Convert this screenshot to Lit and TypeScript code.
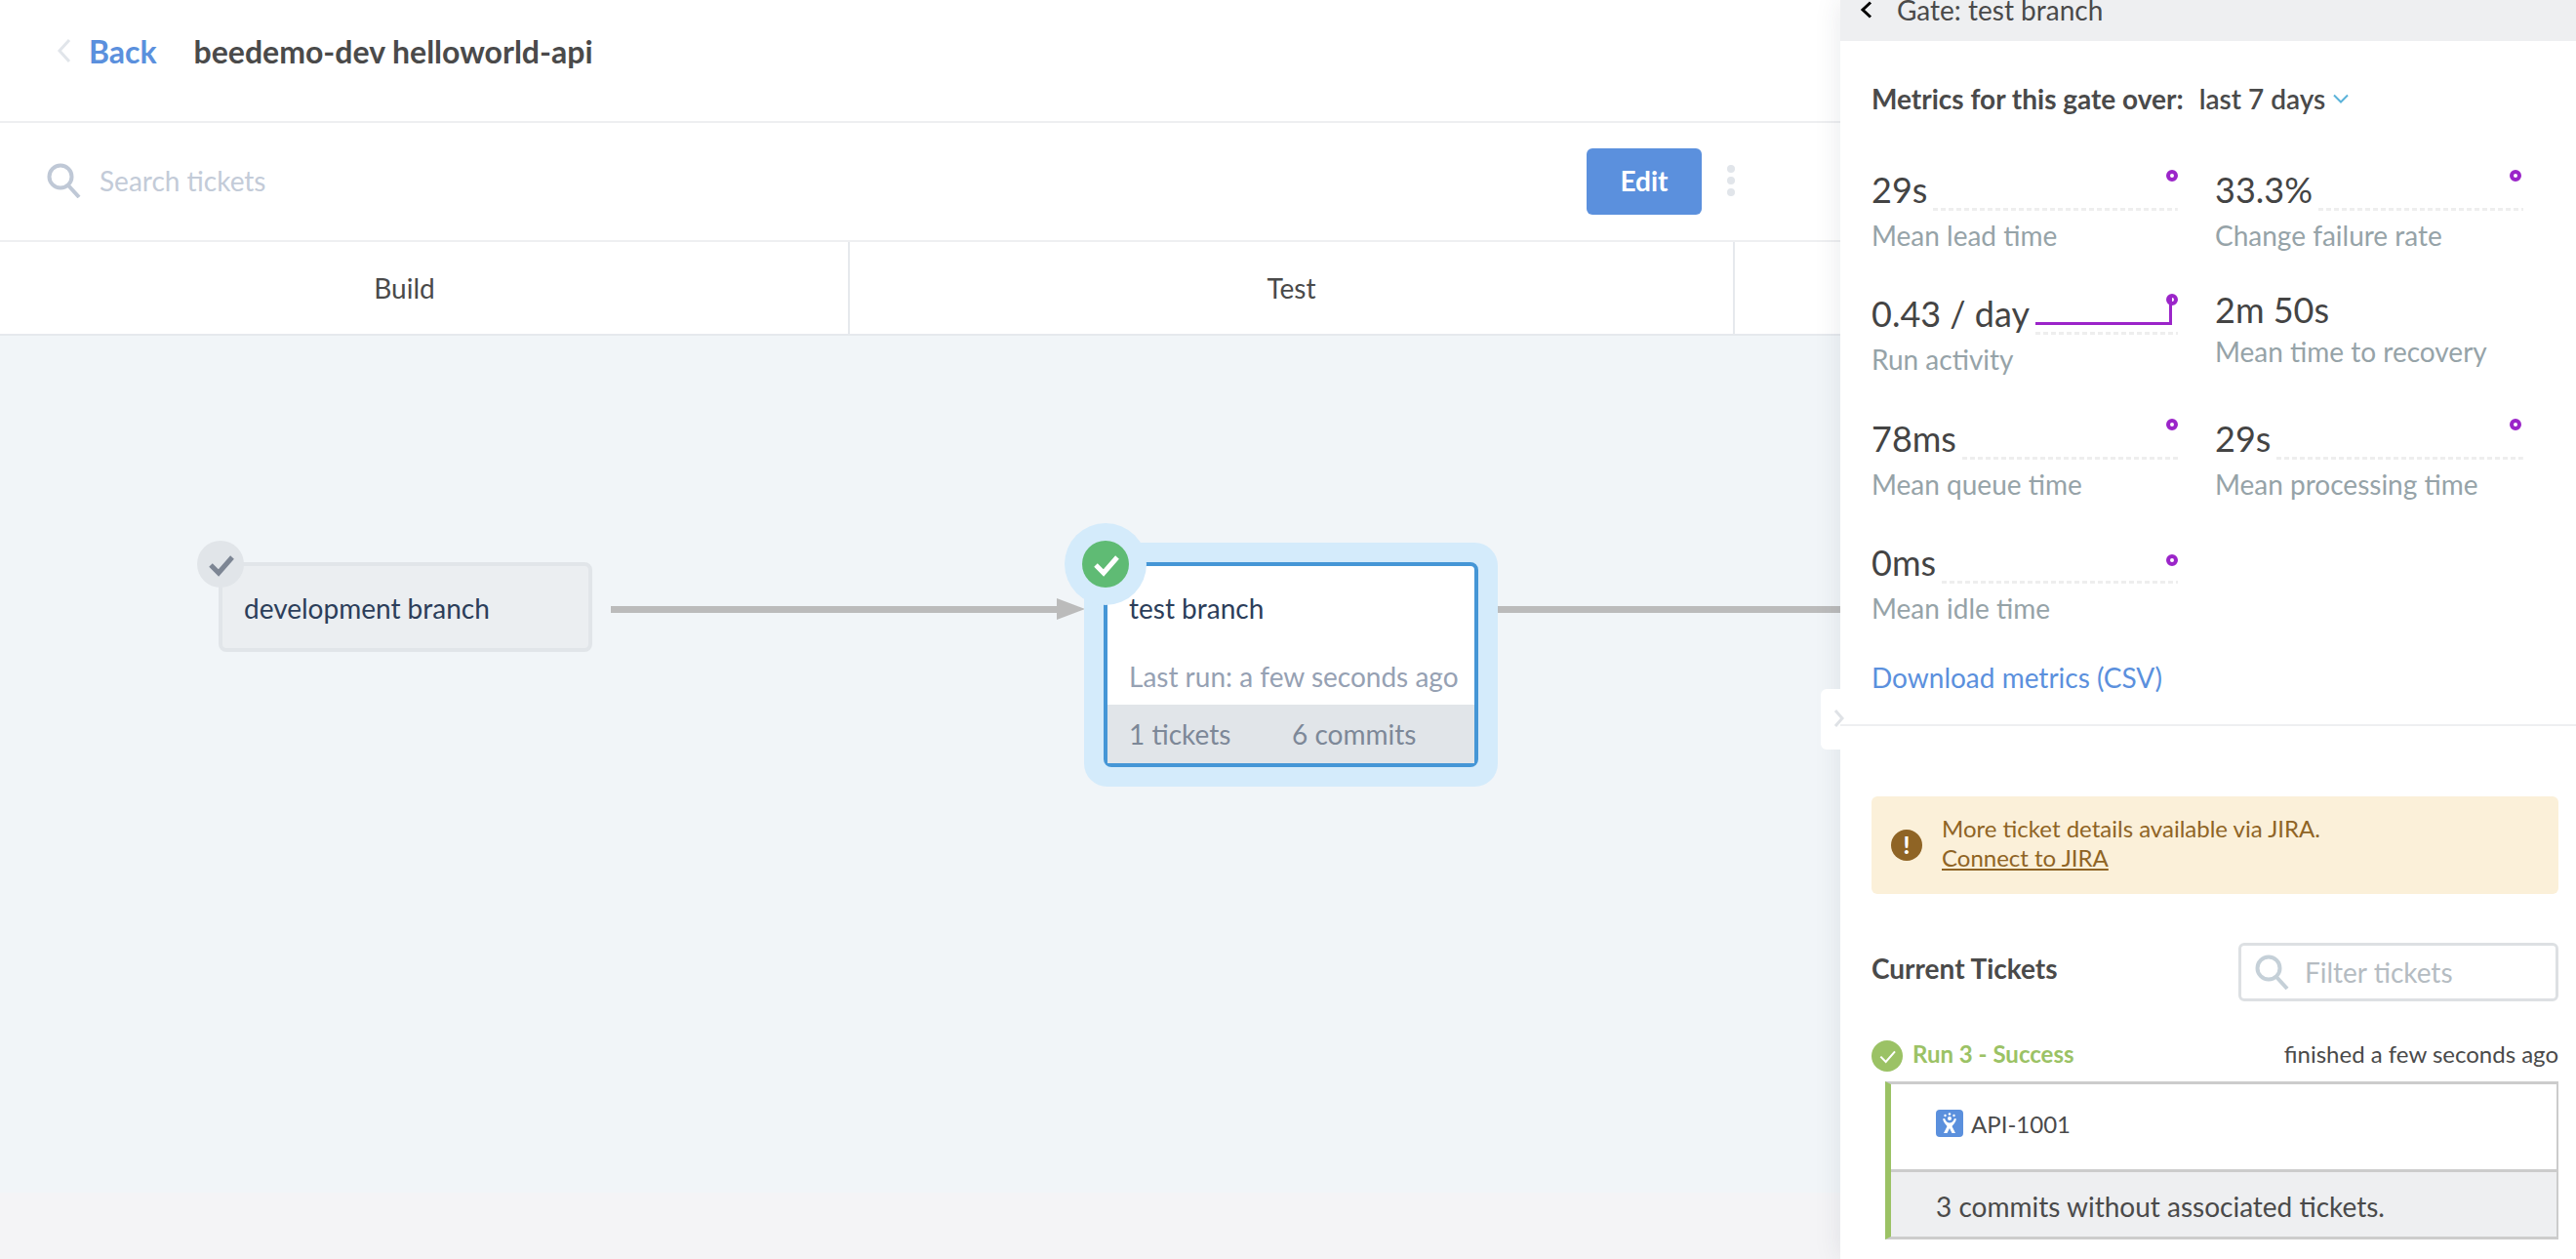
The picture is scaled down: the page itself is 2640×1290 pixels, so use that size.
import { LitElement, html, css, nothing } from 'lit';
import { customElement } from 'lit/decorators.js';

const check = (color: string, width = 3) => html`
  <svg viewBox="0 0 48 48" width="48" height="48">
    <path d="M14 25l8 8 14-16" fill="none" stroke=${color} stroke-width=${width} />
  </svg>
`;

const searchIcon = (color: string) => html`
  <svg viewBox="0 0 36 36" width="36" height="36">
    <circle cx="14" cy="14" r="11.5" fill="none" stroke=${color} stroke-width="4" />
    <path d="M22 23l11 12" fill="none" stroke=${color} stroke-width="4" />
  </svg>
`;

interface Metric {
  value: string;
  label: string;
  spark?: boolean;
  line?: boolean;
  dotTop?: number;
}

const metrics: Metric[] = [
  { value: '29s', label: 'Mean lead time', spark: true },
  { value: '33.3%', label: 'Change failure rate', spark: true },
  { value: '0.43 / day', label: 'Run activity', spark: true, line: true },
  { value: '2m 50s', label: 'Mean time to recovery' },
  { value: '78ms', label: 'Mean queue time', spark: true },
  { value: '29s', label: 'Mean processing time', spark: true },
  { value: '0ms', label: 'Mean idle time', spark: true, dotTop: 24 },
];

@customElement('gate-panel')
class GatePanel extends LitElement {
  static styles = css`
    :host {
      display: block;
      position: relative;
      z-index: 2;
      flex: 0 0 754px;
      height: 1290px;
      background: #fff;
      box-shadow: 0 0 26px rgba(40, 50, 70, 0.1);
      color: #4a4a4a;
    }
    .crumb {
      height: 42px;
      background: #eeeff1;
      display: flex;
      align-items: flex-start;
      padding-left: 20px;
      gap: 24px;
      font-size: 28px;
      line-height: 20px;
    }
    .crumb svg {
      margin-top: 1px;
    }
    .metrics {
      padding: 40px 0 0 32px;
      height: 702px;
      box-sizing: border-box;
      border-bottom: 2px solid #eeeff1;
    }
    .period {
      display: flex;
      align-items: center;
      height: 38px;
      font-size: 28px;
      font-weight: 700;
      color: #4a4a4a;
    }
    .period .range {
      margin-left: 16px;
      font-weight: 600;
    }
    .period svg {
      margin-left: 8px;
    }
    .grid {
      display: grid;
      grid-template-columns: 314px 316px;
      column-gap: 38px;
      grid-auto-rows: 127.3px;
      margin-top: 42px;
    }
    .top {
      display: flex;
      align-items: flex-end;
      height: 54px;
    }
    .value {
      font-size: 36px;
      line-height: 44px;
      white-space: nowrap;
      color: #444;
    }
    .spark {
      flex: 1;
      position: relative;
      height: 54px;
      margin-left: 6px;
      background: repeating-linear-gradient(90deg, #eee 0 5px, transparent 5px 8px) bottom / 100% 3px no-repeat;
    }
    .grid > div:nth-child(even) .dot {
      right: 2px;
    }
    .dot {
      position: absolute;
      right: 0;
      top: 12px;
      width: 4px;
      height: 4px;
      border: 4px solid #9b25c9;
      border-radius: 50%;
    }
    .line {
      position: absolute;
      left: 0;
      right: 6px;
      top: 16px;
      height: 28px;
      border-right: 3px solid #9b25c9;
      border-bottom: 3px solid #9b25c9;
      box-sizing: border-box;
    }
    .label {
      margin-top: 7px;
      font-size: 28px;
      line-height: 36px;
      color: #96a3a8;
    }
    .plain .top {
      height: 50px;
    }
    .plain .label {
      margin-top: 3px;
    }
    .download {
      display: block;
      margin-top: 5px;
      font-size: 28px;
      line-height: 36px;
      color: #5b90dd;
    }
    .tab {
      position: absolute;
      left: -20px;
      top: 706px;
      width: 20px;
      height: 62px;
      background: #fff;
      border-radius: 6px 0 0 6px;
    }
    .tab svg {
      position: absolute;
      left: 13px;
      top: 20px;
    }
    .lower {
      padding: 72px 18px 0 32px;
    }
    .alert {
      display: flex;
      align-items: center;
      gap: 20px;
      height: 100px;
      padding-left: 20px;
      background: #fbf0d9;
      border-radius: 6px;
      color: #8f6425;
      font-size: 24px;
      line-height: 30px;
    }
    .alert .copy {
      padding-bottom: 4px;
    }
    .alert u {
      display: block;
    }
    .bang {
      width: 32px;
      height: 32px;
      border-radius: 50%;
      background: #8f6425;
      color: #fff;
      font-weight: 900;
      font-size: 24px;
      line-height: 32px;
      text-align: center;
    }
    .tickets-head {
      display: flex;
      justify-content: space-between;
      align-items: center;
      margin-top: 50px;
      height: 60px;
    }
    .tickets-head h2 {
      margin: 0 0 9px;
      font-size: 28px;
      font-weight: 700;
    }
    .filter {
      width: 328px;
      height: 60px;
      box-sizing: border-box;
      border: 3px solid #dde0e3;
      border-radius: 6px;
      display: flex;
      align-items: center;
      gap: 15px;
      padding-left: 14px;
      font-size: 28px;
      color: #b5bcc2;
    }
    .run {
      display: flex;
      align-items: center;
      margin-top: 40px;
      height: 32px;
      font-size: 24px;
    }
    .run span {
      padding-bottom: 5px;
    }
    .run .state {
      margin-left: 10px;
      color: #9bc265;
      font-weight: 700;
    }
    .run .when {
      margin-left: auto;
    }
    .run-badge {
      width: 32px;
      height: 32px;
      border-radius: 50%;
      background: #9bc265;
    }
    .run-badge svg {
      display: block;
      width: 32px;
      height: 32px;
    }
    .ticket {
      margin: 10px 0 0 14px;
      border: 3px solid #ccc;
      border-right-width: 2px;
      border-left: 6px solid #9bc265;
      font-size: 28px;
    }
    .issue {
      display: flex;
      align-items: center;
      gap: 8px;
      height: 90px;
      box-sizing: border-box;
      padding: 0 0 7px 46px;
      font-size: 24px;
      border-bottom: 3px solid #ccc;
    }
    .issue svg {
      display: block;
    }
    .loose {
      height: 66px;
      line-height: 70px;
      padding-left: 46px;
      background: #eeeff1;
    }
  `;

  render() {
    return html`
      <div class="crumb">
        <svg viewBox="0 0 14 18" width="14" height="18">
          <path d="M11 1.500L3 9l8 7.500" fill="none" stroke="#000" stroke-width="3" />
        </svg>
        <span>Gate: test branch</span>
      </div>
      <div class="metrics">
        <div class="period">
          Metrics for this gate over:
          <span class="range">last 7 days</span>
          <svg viewBox="0 0 16 10" width="16" height="10">
            <path d="M1 1.500l7 7 7-7" fill="none" stroke="#5ab2d9" stroke-width="2" />
          </svg>
        </div>
        <div class="grid">
          ${metrics.map(
            (m) => html`
              <div class=${m.spark ? '' : 'plain'}>
                <div class="top">
                  <span class="value">${m.value}</span>
                  ${m.spark
                    ? html`<div class="spark">
                        ${m.line ? html`<div class="line"></div>` : nothing}
                        <div class="dot" style=${m.dotTop ? `top: ${m.dotTop}px` : nothing}></div>
                      </div>`
                    : nothing}
                </div>
                <div class="label">${m.label}</div>
              </div>
            `
          )}
        </div>
        <a class="download">Download metrics (CSV)</a>
      </div>
      <div class="tab">
        <svg viewBox="0 0 12 20" width="12" height="20">
          <path d="M2 2l7 8-7 8" fill="none" stroke="#dfe2e6" stroke-width="3" />
        </svg>
      </div>
      <div class="lower">
        <div class="alert">
          <div class="bang">!</div>
          <div class="copy">More ticket details available via JIRA.<u>Connect to JIRA</u></div>
        </div>
        <div class="tickets-head">
          <h2>Current Tickets</h2>
          <div class="filter">${searchIcon('#c5d0d8')}<span>Filter tickets</span></div>
        </div>
        <div class="run">
          <div class="run-badge">${check('#fff', 3)}</div>
          <span class="state">Run 3 - Success</span>
          <span class="when">finished a few seconds ago</span>
        </div>
        <div class="ticket">
          <div class="issue">
            <svg viewBox="0 0 28 28" width="28" height="28">
              <rect width="28" height="28" rx="4" fill="#5b90dd" />
              <g fill="#fff">
                <circle cx="14" cy="4.500" r="1.300" />
                <circle cx="9.500" cy="6" r="1.200" />
                <circle cx="18.500" cy="6" r="1.200" />
                <circle cx="14" cy="9" r="2" />
                <path d="M7 9.500c1 4 3.500 6 4.500 7.500L8 24h3.500L14 19l2.500 5H20l-3.500-7c1-1.500 3.500-3.500 4.500-7.500l-2-.5c-1 3-3 4.500-5 4.500s-4-1.500-5-4.500z" />
              </g>
            </svg>
            API-1001
          </div>
          <div class="loose">3 commits without associated tickets.</div>
        </div>
      </div>
    `;
  }
}

@customElement('pipeline-node')
class PipelineNode extends LitElement {
  static styles = css`
    :host {
      display: block;
      position: absolute;
      top: 232px;
      box-sizing: border-box;
      border-radius: 8px;
      color: #2c3e5a;
      font-size: 28px;
    }
    :host(.done) {
      left: 224px;
      width: 383px;
      height: 92px;
      border: 4px solid #e1e5e9;
      background: #ebeef1;
    }
    :host(.active) {
      left: 1131px;
      width: 384px;
      height: 210px;
      border: 4px solid #4596d6;
      background: #fff;
      box-shadow: 0 0 0 20px #d4ebfb;
    }
    .halo {
      position: absolute;
      left: -44px;
      top: -44px;
      width: 84px;
      height: 84px;
      border-radius: 50%;
      background: #d4ebfb;
    }
    .badge {
      position: absolute;
      left: -26px;
      top: -26px;
      width: 48px;
      height: 48px;
      border-radius: 50%;
      background: #e1e5e9;
    }
    :host(.active) .badge {
      background: #5fbb74;
    }
    .name {
      position: absolute;
      left: 22px;
      top: 25px;
      line-height: 36px;
      white-space: nowrap;
    }
    .run {
      position: absolute;
      left: 22px;
      top: 95px;
      line-height: 36px;
      color: #96a1b3;
      white-space: nowrap;
    }
    .foot {
      position: absolute;
      left: 0;
      right: 0;
      bottom: 0;
      height: 60px;
      display: flex;
      align-items: center;
      padding-left: 22px;
      background: #e1e5e9;
      color: #7d8898;
    }
    .foot span {
      width: 167px;
    }
  `;

  render() {
    const active = this.classList.contains('active');
    return html`
      ${active ? html`<div class="halo"></div>` : nothing}
      <div class="badge">${active ? check('#fff', 5) : check('#7d8694', 5)}</div>
      <div class="name"><slot></slot></div>
      ${active
        ? html`
            <div class="run">Last run: a few seconds ago</div>
            <div class="foot"><span>1 tickets</span><span>6 commits</span></div>
          `
        : nothing}
    `;
  }
}

@customElement('app-root')
export class AppRoot extends LitElement {
  static styles = css`
    :host {
      display: flex;
      width: 2640px;
      height: 1290px;
      overflow: hidden;
      font-family: 'Lato', sans-serif;
      background: #fff;
    }
    .main {
      flex: 1;
      min-width: 0;
      display: flex;
      flex-direction: column;
    }
    .title {
      display: flex;
      align-items: center;
      height: 126px;
      padding: 0 0 20px 58px;
      box-sizing: border-box;
      border-bottom: 2px solid #eeeff1;
      gap: 17px;
    }
    .back {
      color: #5b90dd;
      font-size: 32px;
      font-weight: 700;
    }
    h1 {
      margin: 0 0 0 21px;
      font-size: 32px;
      font-weight: 700;
      color: #4a4a4a;
    }
    .search {
      display: flex;
      align-items: center;
      height: 122px;
      box-sizing: border-box;
      padding: 0 0 2px 48px;
      border-bottom: 2px solid #eeeff1;
      font-size: 28px;
      color: #c3cbd8;
      gap: 18px;
    }
    .edit {
      margin: 2px 0 0 auto;
      width: 118px;
      height: 68px;
      border-radius: 6px;
      background: #5b90dd;
      color: #fff;
      font-weight: 700;
      line-height: 66px;
      text-align: center;
    }
    .more {
      display: flex;
      flex-direction: column;
      gap: 4px;
      margin: 0 108px 0 8px;
    }
    .more i {
      width: 8px;
      height: 8px;
      border-radius: 50%;
      background: #e1e5ea;
    }
    .stages {
      display: flex;
      height: 96px;
      box-sizing: border-box;
      border-bottom: 2px solid #e6e9ed;
      font-size: 28px;
      color: #4a4a4a;
    }
    .stages div {
      line-height: 94px;
      text-align: center;
      border-right: 2px solid #e6e9ed;
      box-sizing: border-box;
    }
    .stages .build {
      width: 871px;
      padding-right: 40px;
    }
    .stages .test {
      width: 907px;
    }
    .canvas {
      flex: 1;
      position: relative;
      background: #f1f5f8;
    }
    .edge {
      position: absolute;
      top: 277px;
      height: 7px;
      background: #bbb;
    }
    .head {
      position: absolute;
      left: 1083px;
      top: 269px;
      border-left: 29px solid #bbb;
      border-top: 11px solid transparent;
      border-bottom: 11px solid transparent;
    }
    .foot-band {
      position: absolute;
      left: 0;
      right: 0;
      bottom: 0;
      height: 68px;
      background: #f4f4f6;
    }
  `;

  render() {
    return html`
      <div class="main">
        <div class="title">
          <svg viewBox="0 0 16 26" width="16" height="26">
            <path d="M13 2L3 13l10 11" fill="none" stroke="#e1e5ea" stroke-width="3" />
          </svg>
          <span class="back">Back</span>
          <h1>beedemo-dev helloworld-api</h1>
        </div>
        <div class="search">
          ${searchIcon('#bfc8d6')}
          <span>Search tickets</span>
          <div class="edit">Edit</div>
          <div class="more"><i></i><i></i><i></i></div>
        </div>
        <div class="stages">
          <div class="build">Build</div>
          <div class="test">Test</div>
        </div>
        <div class="canvas">
          <div class="foot-band"></div>
          <div class="edge" style="left: 626px; width: 460px"></div>
          <div class="head"></div>
          <div class="edge" style="left: 1535px; width: 351px"></div>
          <pipeline-node class="done">development branch</pipeline-node>
          <pipeline-node class="active">test branch</pipeline-node>
        </div>
      </div>
      <gate-panel></gate-panel>
    `;
  }
}
